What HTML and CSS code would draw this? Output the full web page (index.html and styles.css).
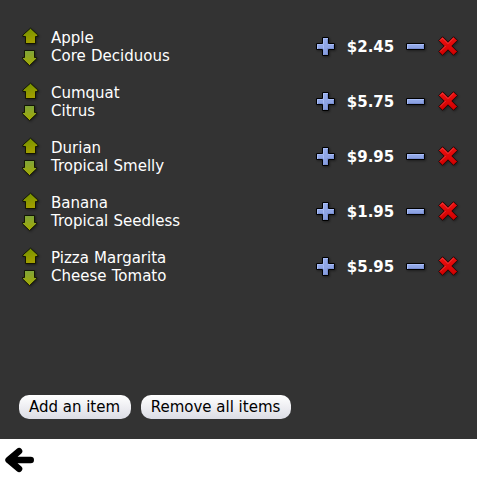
FILE: index.html
```
<!DOCTYPE html>
<html lang="en">
<head>
<meta charset="utf-8">
<title>Items</title>
<link rel="stylesheet" href="styles.css">
</head>
<body>
<svg class="defs" aria-hidden="true">
  <defs>
    <linearGradient id="green-up" x1="0" y1="0" x2=".3" y2="1"><stop offset="0" stop-color="#6f9200"/><stop offset="1" stop-color="#a39f00"/></linearGradient>
    <linearGradient id="green-down" x1="0" y1="0" x2="0" y2="1"><stop offset="0" stop-color="#7fa53c"/><stop offset="1" stop-color="#a5aa00"/></linearGradient>
    <linearGradient id="blue" x1="0" y1="0" x2="0" y2="1"><stop offset="0" stop-color="#98aeec"/><stop offset="1" stop-color="#869cdd"/></linearGradient>
    <linearGradient id="red" x1="0" y1="0" x2="0" y2="1"><stop offset="0" stop-color="#ee1010"/><stop offset="1" stop-color="#d00000"/></linearGradient>
  </defs>
  <symbol id="up" viewBox="0 0 18 18"><path d="M8.5 1.2 15.8 8V9.5H13.5V16.5H3.5V9.5H.9V8Z" fill="url(#green-up)" stroke="#0c0e00" stroke-width=".9"/></symbol>
  <symbol id="down" viewBox="0 0 18 18"><path d="M2.5 1.5H12.5V8.5H14.6V9.8L7.5 16.6 .5 9.8V8.5H2.5Z" fill="url(#green-down)" stroke="#0c0e00" stroke-width=".9"/></symbol>
  <symbol id="plus" viewBox="0 0 20 20"><path d="M6.5 1.5H12.5V7.5H18.5V13.5H12.5V19.5H6.5V13.5H.5V7.5H6.5Z" fill="url(#blue)" stroke="#000"/><path d="M7.5 13V8.5M7.5 8V2.5H12M1.5 13V8.5H7M12 8.5H18" fill="none" stroke="#b4c8ff" stroke-opacity=".65"/><path d="M11.5 3V8M17.5 9V12.5H11.5V18.5H8M2 12.5H7" fill="none" stroke="#6f84c8" stroke-opacity=".65"/></symbol>
  <symbol id="minus" viewBox="0 0 20 20"><path d="M.5 7.5H18.5V13.5H.5Z" fill="url(#blue)" stroke="#000"/><path d="M1.5 13V8.5H18" fill="none" stroke="#b4c8ff" stroke-opacity=".65"/><path d="M2 12.5H17.5V9" fill="none" stroke="#6f84c8" stroke-opacity=".65"/></symbol>
  <symbol id="cross" viewBox="0 0 20 20"><path d="M4.5 .7 10 6.2 15.5 .7 19.3 4.5 13.8 10 19.3 15.5 15.5 19.3 10 13.8 4.5 19.3 .7 15.5 6.2 10 .7 4.5Z" fill="url(#red)" stroke="#180000" stroke-width=".8"/><path d="M2.1 4.5 4.5 2.1 10 7.6 15.5 2.1M2.1 15.5 7.6 10" fill="none" stroke="#ff8080" stroke-opacity=".5" stroke-width=".8"/></symbol>
</svg>
<main class="panel">
  <ul class="items">
    <li class="item">
      <div class="order"><svg><use href="#up"/></svg><svg><use href="#down"/></svg></div>
      <div class="info"><div>Apple</div><div>Core Deciduous</div></div>
      <svg class="action"><use href="#plus"/></svg><b class="price">$2.45</b><svg class="action"><use href="#minus"/></svg><svg class="action remove"><use href="#cross"/></svg>
    </li>
    <li class="item">
      <div class="order"><svg><use href="#up"/></svg><svg><use href="#down"/></svg></div>
      <div class="info"><div>Cumquat</div><div>Citrus</div></div>
      <svg class="action"><use href="#plus"/></svg><b class="price">$5.75</b><svg class="action"><use href="#minus"/></svg><svg class="action remove"><use href="#cross"/></svg>
    </li>
    <li class="item">
      <div class="order"><svg><use href="#up"/></svg><svg><use href="#down"/></svg></div>
      <div class="info"><div>Durian</div><div>Tropical Smelly</div></div>
      <svg class="action"><use href="#plus"/></svg><b class="price">$9.95</b><svg class="action"><use href="#minus"/></svg><svg class="action remove"><use href="#cross"/></svg>
    </li>
    <li class="item">
      <div class="order"><svg><use href="#up"/></svg><svg><use href="#down"/></svg></div>
      <div class="info"><div>Banana</div><div>Tropical Seedless</div></div>
      <svg class="action"><use href="#plus"/></svg><b class="price">$1.95</b><svg class="action"><use href="#minus"/></svg><svg class="action remove"><use href="#cross"/></svg>
    </li>
    <li class="item">
      <div class="order"><svg><use href="#up"/></svg><svg><use href="#down"/></svg></div>
      <div class="info"><div>Pizza Margarita</div><div>Cheese Tomato</div></div>
      <svg class="action"><use href="#plus"/></svg><b class="price">$5.95</b><svg class="action"><use href="#minus"/></svg><svg class="action remove"><use href="#cross"/></svg>
    </li>
  </ul>
  <div class="buttons">
    <button class="btn add">Add an item</button>
    <button class="btn clear">Remove all items</button>
  </div>
</main>
<footer class="nav">
  <svg class="back" viewBox="0 0 30 26"><path d="M14 4.2 3.6 13 14 21.8M4 13H25.7" fill="none" stroke="#000" stroke-width="6.6" stroke-linecap="round" stroke-linejoin="round"/></svg>
</footer>
</body>
</html>
```
FILE: styles.css
```
* {
  box-sizing: border-box;
}

body {
  margin: 0;
  background: #fff;
  font: 15px/18px "DejaVu Sans", sans-serif;
}

.defs {
  position: absolute;
  width: 0;
  height: 0;
}

.panel {
  display: flex;
  flex-direction: column;
  justify-content: space-between;
  height: 439px;
  padding: 19px 19px 20px;
  background: #333;
  color: #fff;
}

.items {
  margin: 0;
  padding: 0;
  list-style: none;
}

.item {
  display: flex;
  align-items: flex-start;
  height: 55px;
  padding-top: 8px;
}

.order {
  display: flex;
  flex-direction: column;
  gap: 4px;
  width: 32px;
  padding-left: 3px;
}

.order svg {
  width: 18px;
  height: 18px;
  filter: drop-shadow(1px 1px 1px rgba(0, 0, 0, 0.4));
}

.info {
  flex: 1;
  margin-top: 2px;
}

.info div {
  word-spacing: 0.5px;
}

.action {
  width: 20px;
  height: 20px;
  margin-top: 9px;
  filter: drop-shadow(1px 1px 1px rgba(0, 0, 0, 0.4));
}

.price {
  width: 70px;
  margin-top: 11px;
  padding-right: 1px;
  text-align: center;
}

.remove {
  margin-left: 12px;
}

.buttons {
  display: flex;
  gap: 10px;
}

.btn {
  height: 24px;
  padding: 0 1px 0 0;
  border: 0;
  border-radius: 10px;
  background: linear-gradient(#fff, #dcdde5);
  color: #000;
  font: inherit;
}

.add {
  width: 112px;
}

.clear {
  width: 150px;
}

.nav {
  padding: 8px 5px;
}

.back {
  display: block;
  width: 30px;
  height: 26px;
}
```
